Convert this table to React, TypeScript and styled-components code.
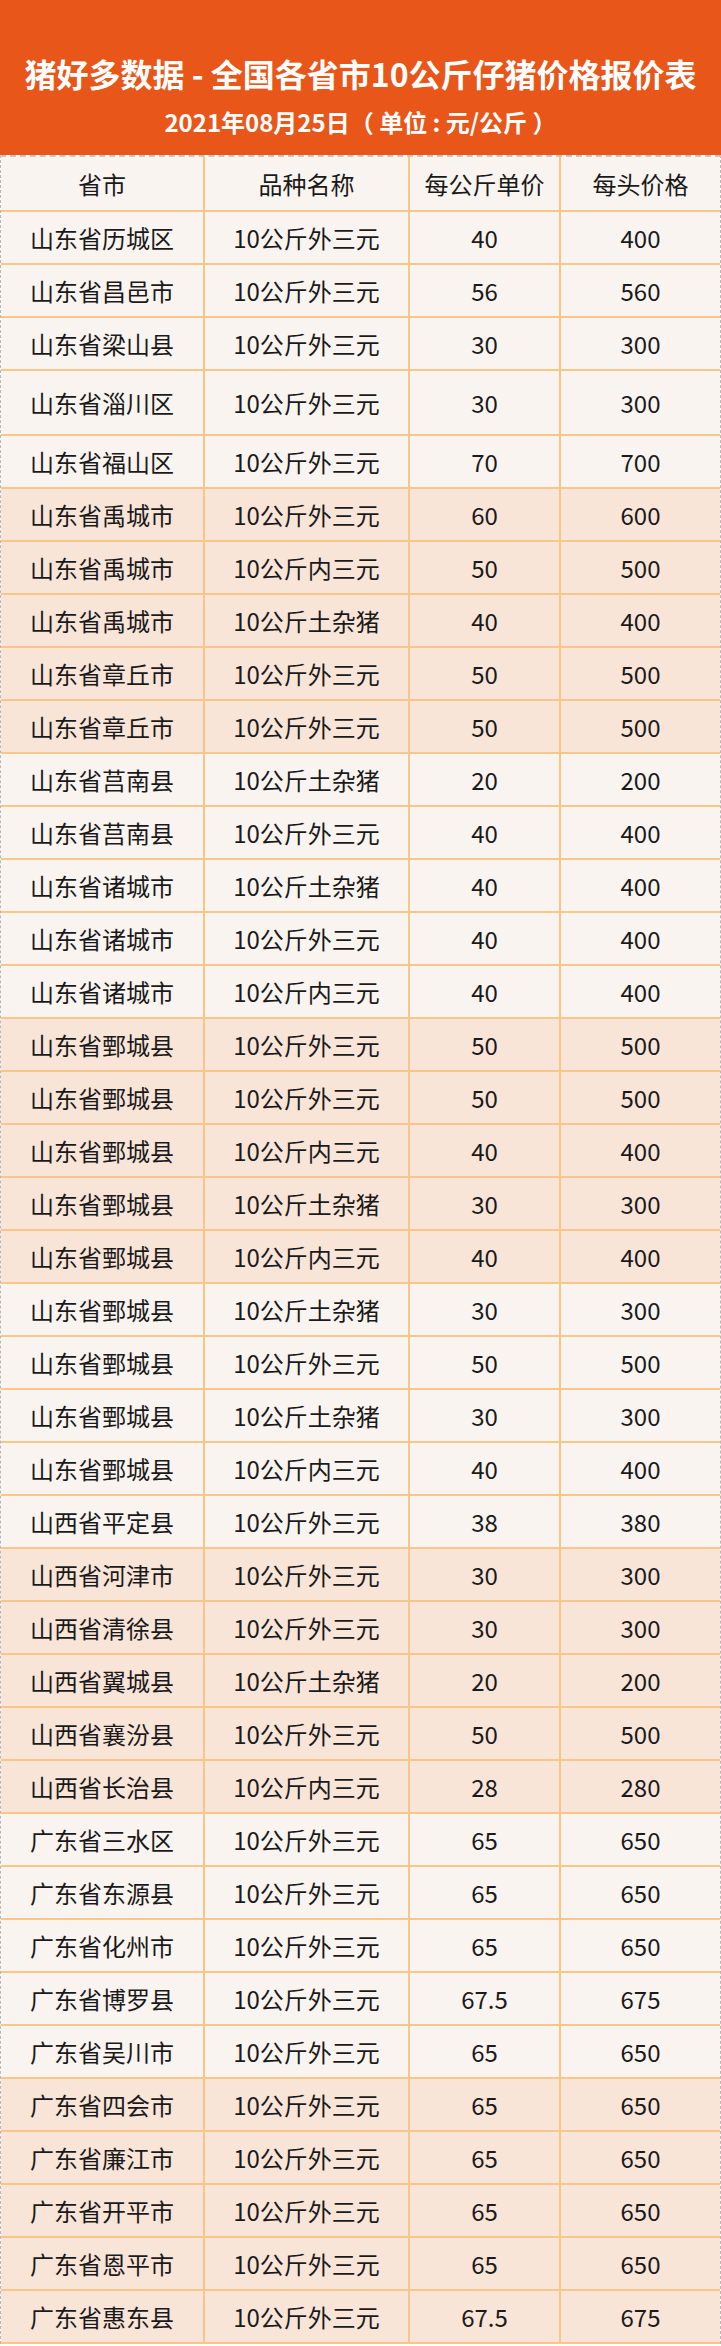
import React from 'react';
import styled, { createGlobalStyle } from 'styled-components';

const GlobalStyle = createGlobalStyle`
  * { box-sizing: border-box; }
  body {
    margin: 0;
    background: #ffffff;
    font-family: 'Noto Sans CJK SC', 'Noto Sans', sans-serif;
  }
`;

const Page = styled.div`
  width: 721px;
`;

const Banner = styled.header`
  height: 155px;
  background: #e8561a;
  color: #ffffff;
  display: flex;
  flex-direction: column;
  align-items: center;
  padding-top: 52px;
  font-weight: 700;
`;

const Title = styled.h1`
  margin: 0;
  font-size: 32px;
  line-height: 42px;
  font-weight: 700;
  white-space: nowrap;
`;

const Subtitle = styled.div`
  margin-top: 13px;
  font-size: 24px;
  line-height: 30px;
  white-space: pre;
`;

const Table = styled.div`
  border-top: 2px dashed #c9c2bc;
  border-left: 1px dashed #bdb6b0;
  border-right: 1px dashed #bdb6b0;
`;

const Row = styled.div<{ $tone: 'light' | 'peach'; $height: number }>`
  display: grid;
  grid-template-columns: 204px 205px 151px 159px;
  height: ${(p) => p.$height}px;
  background: ${(p) => (p.$tone === 'peach' ? '#f9e4d8' : '#faf4f0')};
  border-bottom: 2px solid #f8c687;
`;

const Cell = styled.div`
  display: flex;
  align-items: center;
  justify-content: center;
  border-right: 2px solid #f8c687;
  font-size: 24px;
  color: #1a1a1a;
  white-space: nowrap;

  &:last-child {
    border-right: none;
  }
`;

type Item = [string, string, string, string];

const rows: Item[] = [
  ['山东省历城区', '10公斤外三元', '40', '400'],
  ['山东省昌邑市', '10公斤外三元', '56', '560'],
  ['山东省梁山县', '10公斤外三元', '30', '300'],
  ['山东省淄川区', '10公斤外三元', '30', '300'],
  ['山东省福山区', '10公斤外三元', '70', '700'],
  ['山东省禹城市', '10公斤外三元', '60', '600'],
  ['山东省禹城市', '10公斤内三元', '50', '500'],
  ['山东省禹城市', '10公斤土杂猪', '40', '400'],
  ['山东省章丘市', '10公斤外三元', '50', '500'],
  ['山东省章丘市', '10公斤外三元', '50', '500'],
  ['山东省莒南县', '10公斤土杂猪', '20', '200'],
  ['山东省莒南县', '10公斤外三元', '40', '400'],
  ['山东省诸城市', '10公斤土杂猪', '40', '400'],
  ['山东省诸城市', '10公斤外三元', '40', '400'],
  ['山东省诸城市', '10公斤内三元', '40', '400'],
  ['山东省鄄城县', '10公斤外三元', '50', '500'],
  ['山东省鄄城县', '10公斤外三元', '50', '500'],
  ['山东省鄄城县', '10公斤内三元', '40', '400'],
  ['山东省鄄城县', '10公斤土杂猪', '30', '300'],
  ['山东省鄄城县', '10公斤内三元', '40', '400'],
  ['山东省鄄城县', '10公斤土杂猪', '30', '300'],
  ['山东省鄄城县', '10公斤外三元', '50', '500'],
  ['山东省鄄城县', '10公斤土杂猪', '30', '300'],
  ['山东省鄄城县', '10公斤内三元', '40', '400'],
  ['山西省平定县', '10公斤外三元', '38', '380'],
  ['山西省河津市', '10公斤外三元', '30', '300'],
  ['山西省清徐县', '10公斤外三元', '30', '300'],
  ['山西省翼城县', '10公斤土杂猪', '20', '200'],
  ['山西省襄汾县', '10公斤外三元', '50', '500'],
  ['山西省长治县', '10公斤内三元', '28', '280'],
  ['广东省三水区', '10公斤外三元', '65', '650'],
  ['广东省东源县', '10公斤外三元', '65', '650'],
  ['广东省化州市', '10公斤外三元', '65', '650'],
  ['广东省博罗县', '10公斤外三元', '67.5', '675'],
  ['广东省吴川市', '10公斤外三元', '65', '650'],
  ['广东省四会市', '10公斤外三元', '65', '650'],
  ['广东省廉江市', '10公斤外三元', '65', '650'],
  ['广东省开平市', '10公斤外三元', '65', '650'],
  ['广东省恩平市', '10公斤外三元', '65', '650'],
  ['广东省惠东县', '10公斤外三元', '67.5', '675'],
];

const App = () => {
  return (
    <Page>
      <GlobalStyle />
      <Banner>
        <Title>猪好多数据 - 全国各省市10公斤仔猪价格报价表</Title>
        <Subtitle>2021年08月25日（ 单位 : 元/公斤 ）</Subtitle>
      </Banner>
      <Table>
        <Row $tone='light' $height={55}>
          <Cell>省市</Cell>
          <Cell>品种名称</Cell>
          <Cell>每公斤单价</Cell>
          <Cell>每头价格</Cell>
        </Row>
        {rows.map((r, i) => (
          <Row
            key={i}
            $tone={Math.floor(i / 5) % 2 === 1 ? 'peach' : 'light'}
            $height={i === 3 ? 65 : 53}
          >
            {r.map((c, j) => (
              <Cell key={j}>{c}</Cell>
            ))}
          </Row>
        ))}
      </Table>
    </Page>
  );
};

export default App;
